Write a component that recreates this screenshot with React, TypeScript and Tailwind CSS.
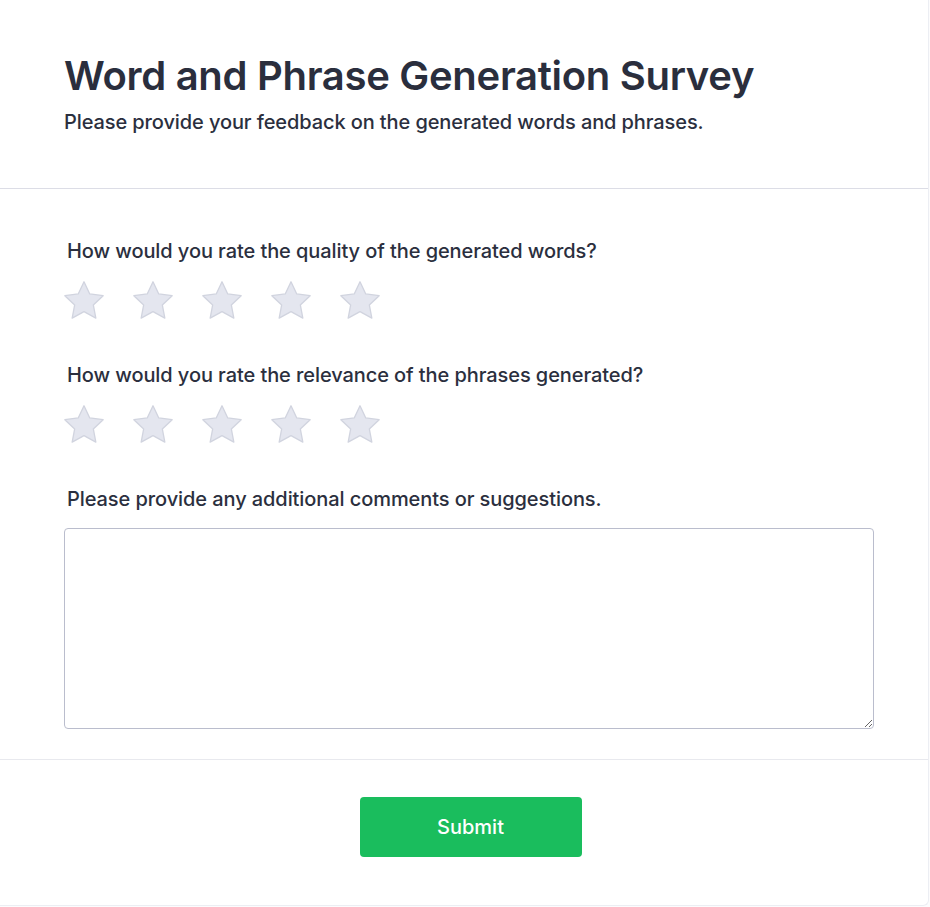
import React, { useState } from "react";

const questions = [
  "How would you rate the quality of the generated words?",
  "How would you rate the relevance of the phrases generated?",
];

function Star({ active }: { active: boolean }) {
  return (
    <svg viewBox="0 0 24 24" className="w-[42px] h-[42px]">
      <path
        d="M12 1L15.29 7.97L22.94 8.95L17.33 14.23L18.76 21.8L12 18.1L5.24 21.8L6.67 14.23L1.06 8.95L8.71 7.97Z"
        fill={active ? "#facc15" : "#e4e6ef"}
        stroke={active ? "#eab308" : "#d1d4df"}
        strokeWidth="0.75"
        strokeLinejoin="round"
      />
    </svg>
  );
}

function StarRow() {
  const [value, setValue] = useState(0);
  return (
    <div className="flex gap-[27px] mt-[15px] ml-[-1px]">
      {[1, 2, 3, 4, 5].map((n) => (
        <button key={n} type="button" onClick={() => setValue(n)} className="p-0">
          <Star active={n <= value} />
        </button>
      ))}
    </div>
  );
}

export default function App() {
  return (
    <div className="min-h-screen bg-[#fcfcfd] font-['Inter','Liberation_Sans',sans-serif] text-[#2b2f3e]">
      <div className="w-[929px] bg-white border-r border-b border-[#eceef3] rounded-br-md">
        <div className="pl-16 pt-[52px] pb-[52px] border-b border-[#dcdde6]">
          <h1 className="text-[40px] leading-[48px] font-semibold tracking-[-0.3px] text-[#2a2e3d]">
            Word and Phrase Generation Survey
          </h1>
          <p className="mt-[8px] text-[20px] leading-[28px] font-medium tracking-[-0.1px] text-[#2b2f3e]">
            Please provide your feedback on the generated words and phrases.
          </p>
        </div>

        <div className="pl-16 pr-[54px] pt-[48px] pb-[30px] border-b border-[#e8e9ee]">
          {questions.map((q) => (
            <div key={q} className="mb-[39px]">
              <label className="block pl-[3px] text-[20px] leading-[28px] font-medium tracking-[-0.08px]">
                {q}
              </label>
              <StarRow />
            </div>
          ))}
          <label className="block pl-[3px] text-[20px] leading-[28px] font-medium tracking-[-0.08px]">
            Please provide any additional comments or suggestions.
          </label>
          <textarea className="block mt-[15px] w-full h-[201px] rounded-[4px] border border-[#babdcd] bg-white p-3 text-base outline-none" />
        </div>

        <div className="flex justify-center pl-[13px] pt-[37px] pb-[48px]">
          <button
            type="button"
            className="w-[222px] h-[60px] rounded-[4px] bg-[#1abd5d] text-white text-[20px] font-medium"
          >
            Submit
          </button>
        </div>
      </div>
    </div>
  );
}
